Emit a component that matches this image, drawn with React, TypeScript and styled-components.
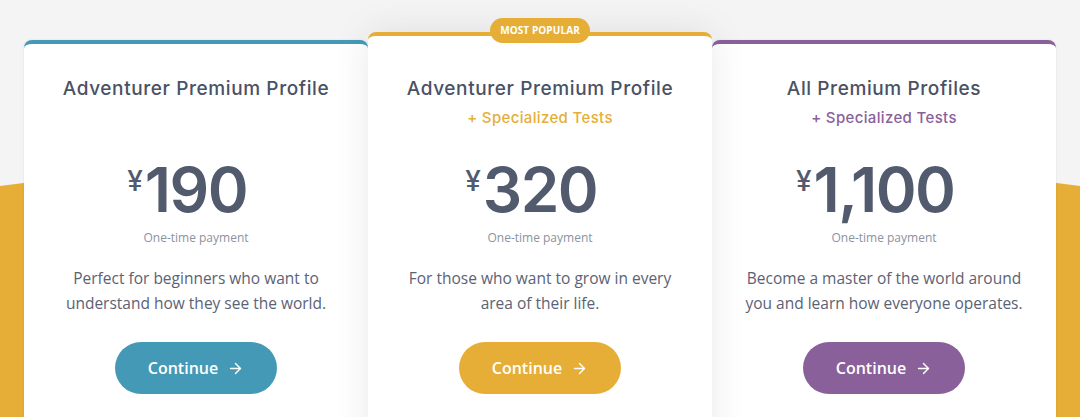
import React from 'react';
import styled, { createGlobalStyle } from 'styled-components';
import { ArrowRight } from 'lucide-react';

const GlobalStyle = createGlobalStyle`
  html, body {
    margin: 0;
    padding: 0;
    background: #f4f4f4;
  }
  * {
    box-sizing: border-box;
  }
`;

const colors = {
  teal: '#449ab6',
  yellow: '#e6ae37',
  purple: '#8a609b',
};

type Accent = keyof typeof colors;

const Section = styled.section`
  position: relative;
  height: 417px;
  overflow: hidden;
  background: #f4f4f4;

  /* yellow dome sitting behind the cards */
  &::before {
    content: '';
    position: absolute;
    left: 50%;
    top: 152px;
    width: 2000px;
    height: 430px;
    margin-left: -1000px;
    border-radius: 50%;
    background: ${colors.yellow};
  }
`;

const Grid = styled.div`
  position: relative;
  display: grid;
  grid-template-columns: repeat(3, 344px);
  justify-content: center;
  padding: 40px 24px 0;
`;

const Card = styled.div<{ $accent: Accent; $featured?: boolean }>`
  position: relative;
  z-index: ${p => (p.$featured ? 2 : 1)};
  display: flex;
  flex-direction: column;
  align-items: center;
  height: 460px;
  margin-top: ${p => (p.$featured ? '-8px' : '0')};
  padding: ${p => (p.$featured ? '41px' : '33px')} 24px 0;
  background: #fff;
  border-top: 4px solid ${p => colors[p.$accent]};
  border-radius: 8px 8px 0 0;
  box-shadow: ${p =>
    p.$featured ? '0 0 36px rgba(40, 44, 60, 0.1)' : '0 0 2px rgba(40, 44, 60, 0.12)'};
`;

const Badge = styled.div`
  position: absolute;
  top: -18px;
  left: 50%;
  transform: translateX(-50%);
  width: 100px;
  height: 25px;
  border-radius: 13px;
  background: ${colors.yellow};
  color: #fff;
  font-family: 'Open Sans', sans-serif;
  font-size: 10px;
  font-weight: 700;
  line-height: 25px;
  text-align: center;
  letter-spacing: 0.1px;
`;

const Title = styled.h3`
  margin: 0;
  font-family: 'Inter', sans-serif;
  font-size: 19px;
  font-weight: 500;
  line-height: 24px;
  color: #4a5165;
  letter-spacing: 0.6px;
  white-space: nowrap;
`;

const Subtitle = styled.div<{ $accent?: Accent }>`
  height: 20px;
  margin-top: 7px;
  font-family: 'Inter', sans-serif;
  font-size: 15px;
  font-weight: 500;
  line-height: 20px;
  letter-spacing: 0.35px;
  color: ${p => (p.$accent ? colors[p.$accent] : 'transparent')};
`;

/* the number is centred on its own; the yen sign hangs off its left edge */
const Price = styled.div`
  position: relative;
  margin-top: 31px;
  color: #525a6d;
  font-family: 'Inter', sans-serif;
  font-size: 62px;
  font-weight: 600;
  line-height: 62px;
  letter-spacing: -1.5px;
`;

const Currency = styled.span`
  position: absolute;
  right: 100%;
  top: 8px;
  margin-right: 2px;
  font-size: 28px;
  font-weight: 500;
  line-height: 1;
  letter-spacing: 0;
`;

const Note = styled.div`
  margin-top: 8px;
  font-family: 'Open Sans', sans-serif;
  font-size: 12px;
  line-height: 18px;
  color: #8c929e;
`;

const Description = styled.p`
  margin: 19px 0 0;
  font-family: 'Open Sans', sans-serif;
  font-size: 15.5px;
  line-height: 25px;
  color: #5b6274;
  text-align: center;
`;

const Button = styled.button<{ $accent: Accent }>`
  display: flex;
  align-items: center;
  justify-content: center;
  gap: 9px;
  width: 162px;
  height: 52px;
  margin-top: 26px;
  border: none;
  border-radius: 26px;
  background: ${p => colors[p.$accent]};
  color: #fff;
  font-family: 'Open Sans', sans-serif;
  font-size: 16px;
  font-weight: 600;
  cursor: pointer;
`;

interface Plan {
  title: string;
  extra?: boolean;
  amount: string;
  blurb: string;
  accent: Accent;
  featured?: boolean;
}

const plans: Plan[] = [
  {
    title: 'Adventurer Premium Profile',
    amount: '190',
    blurb: 'Perfect for beginners who want to understand how they see the world.',
    accent: 'teal',
  },
  {
    title: 'Adventurer Premium Profile',
    extra: true,
    amount: '320',
    blurb: 'For those who want to grow in every area of their life.',
    accent: 'yellow',
    featured: true,
  },
  {
    title: 'All Premium Profiles',
    extra: true,
    amount: '1,100',
    blurb: 'Become a master of the world around you and learn how everyone operates.',
    accent: 'purple',
  },
];

const App: React.FC = () => (
  <>
    <GlobalStyle />
    <Section>
      <Grid>
        {plans.map((plan, i) => (
          <Card key={i} $accent={plan.accent} $featured={plan.featured}>
            {plan.featured && <Badge>MOST POPULAR</Badge>}
            <Title>{plan.title}</Title>
            <Subtitle $accent={plan.extra ? plan.accent : undefined}>
              {plan.extra ? '+ Specialized Tests' : ''}
            </Subtitle>
            <Price>
              <Currency>¥</Currency>
              {plan.amount}
            </Price>
            <Note>One-time payment</Note>
            <Description>{plan.blurb}</Description>
            <Button $accent={plan.accent}>
              Continue
              <ArrowRight size={17} strokeWidth={2} />
            </Button>
          </Card>
        ))}
      </Grid>
    </Section>
  </>
);

export default App;
